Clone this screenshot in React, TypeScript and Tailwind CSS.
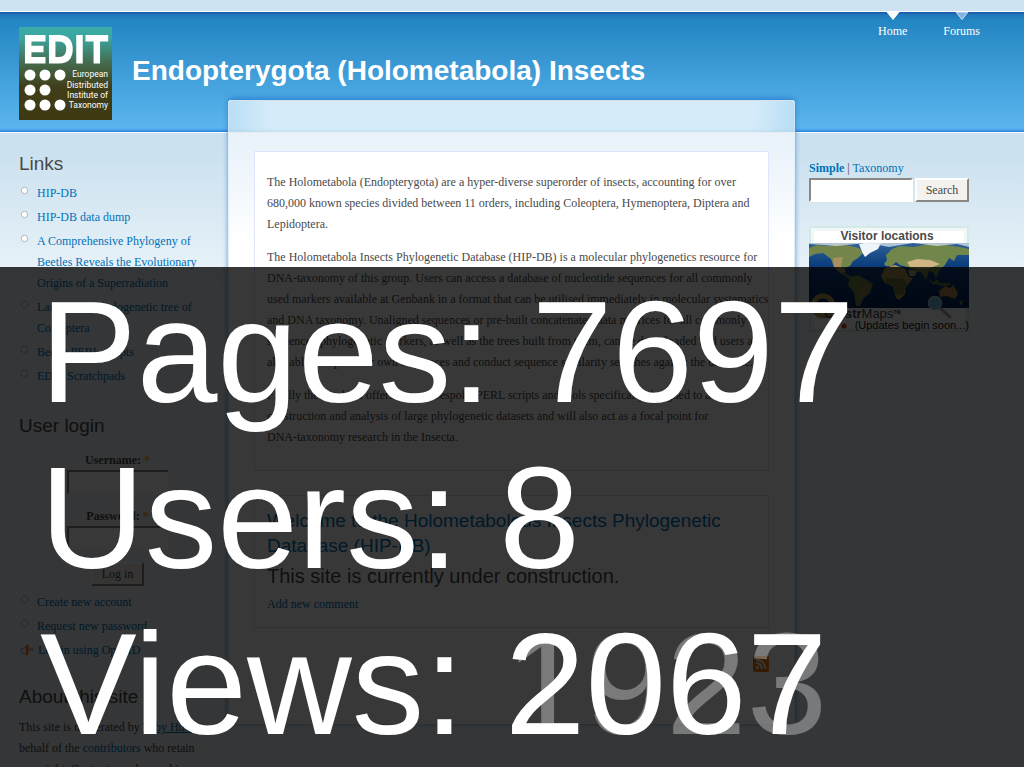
import type { ReactNode } from "react";

const serif = "font-['Liberation_Serif','Noto_Serif',serif]";
const sans = "font-['Liberation_Sans',Arial,sans-serif]";

function Bullet() {
  return (
    <svg width="9" height="9" viewBox="0 0 9 9" className="mt-[3px] shrink-0" aria-hidden="true">
      <circle cx="4.5" cy="4.5" r="3.2" fill="#fff" stroke="#b5b5b5" strokeWidth="1" />
    </svg>
  );
}

function OpenIdMark() {
  return (
    <svg width="14" height="12" viewBox="0 0 14 12" className="mt-1 -mr-1 shrink-0" aria-hidden="true">
      <path d="M6 3.6C3 3.8 1 5 1 6.7C1 8.4 3 9.6 6 10" fill="none" stroke="#b9b9b9" strokeWidth="1.6" />
      <path d="M8.4 3.6C10 3.8 11 4.3 12 5M12.6 3.4V6.4H9" fill="none" stroke="#b9b9b9" strokeWidth="1.3" />
      <path d="M6 1.5L8.4 0V10L6 11.4Z" fill="#f60" />
    </svg>
  );
}

function Item({ children, icon }: { children: ReactNode; icon?: ReactNode }) {
  return (
    <li className="mb-[3px] flex gap-2 pl-[1px]">
      {icon ?? <Bullet />}
      <a href="#" className="text-[#0072b9]">{children}</a>
    </li>
  );
}

function Logo() {
  const dots = [
    [11, 48], [26, 48], [41, 48],
    [11, 63], [26, 63],
    [11, 78], [26, 78], [41, 78],
  ];
  return (
    <svg width="93" height="93" viewBox="0 0 93 93" role="img" aria-label="EDIT" className="shrink-0">
      <defs>
        <linearGradient id="logoBg" x1="0" y1="0" x2="0" y2="1">
          <stop offset="0" stopColor="#3aaba6" />
          <stop offset="0.12" stopColor="#3ba59d" />
          <stop offset="0.4" stopColor="#45684a" />
          <stop offset="0.65" stopColor="#403d18" />
          <stop offset="1" stopColor="#3d3a12" />
        </linearGradient>
      </defs>
      <rect width="93" height="93" fill="url(#logoBg)" />
      <g fill="none" stroke="#fff" strokeWidth="6.5">
        <path d="M26.500 11.200H9.200V33.200H26.500M9 22H24.500" />
        <path d="M33.200 11.200H40C47 11.200 50.500 15 50.500 22C50.500 29.500 47 33.200 40 33.200H33.200Z" />
        <path d="M60.500 8V36.400M66.500 11.200H89.200M77.800 11V36.400" />
      </g>
      {dots.map(([x, y]) => (
        <circle key={`${x}-${y}`} cx={x} cy={y} r="5.5" fill="#fff" />
      ))}
      <g fill="#fff" fontFamily="Roboto, sans-serif" fontSize="8.5" fontWeight="400" textAnchor="end">
        <text x="89" y="50">European</text>
        <text x="89" y="61">Distributed</text>
        <text x="89" y="71">Institute of</text>
        <text x="89" y="81">Taxonomy</text>
      </g>
    </svg>
  );
}

function VisitorMap() {
  return (
    <svg width="160" height="106" viewBox="0 0 160 106" role="img" aria-label="Visitor locations" className="mt-6 block">
      <defs>
        <linearGradient id="sea" x1="0" y1="0" x2="0" y2="1">
          <stop offset="0" stopColor="#2f6298" />
          <stop offset="0.35" stopColor="#0b3c7c" />
          <stop offset="1" stopColor="#04245c" />
        </linearGradient>
      </defs>
      <rect width="160" height="106" fill="#d3eae6" />
      <rect x="2" y="2" width="156" height="102" fill="#f0f7f6" />
      <rect x="5" y="5" width="150" height="97" fill="#fff" />
      <rect y="17" width="160" height="65" fill="url(#sea)" />
      <path d="M0 22L8 19L18 20L30 18L42 20L50 22L54 27L49 32L44 35L41 40L36 42L34 46L39 49L44 52L41 53L31 47L25 41L22 33L14 27L6 28L0 31Z" fill="#73854b" />
      <path d="M24 32L34 31L32 40L37 46L32 47L25 41Z" fill="#a98f5b" />
      <path d="M50 18L60 16L72 17L69 23L61 27L56 31L53 26Z" fill="#eef4f8" />
      <path d="M41 51L49 49L58 54L64 58L61 67L54 73L51 80L47 80L45 67L39 59Z" fill="#718344" />
      <path d="M50 61L60 58L57 68L51 73Z" fill="#93804a" />
      <path d="M75 38L78 34L77 29L83 23L91 20L104 21L120 18L136 19L151 21L160 23V29L148 29L145 35L140 32L136 39L130 45L127 52L124 46L120 45L117 54L112 46L104 45L98 41L91 39L87 36L83 40L77 40Z" fill="#71864a" />
      <path d="M76 42L86 39L96 43L100 51L104 52L97 61L96 68L90 74L87 72L84 60L76 57L72 50Z" fill="#ad9057" />
      <path d="M77 52L95 53L98 59L94 68L87 69L84 59L77 57Z" fill="#6a743d" />
      <path d="M98 36L108 33L121 34L131 38L121 42L110 43L101 41Z" fill="#d1b584" />
      <path d="M99 44L108 45L106 50L101 50Z" fill="#c8a873" />
      <path d="M130 65L136 60L141 62L144 59L149 67L146 73L138 70L131 71Z" fill="#b0834a" />
      <path d="M119 52L124 56L129 53L130 57L139 57L143 59L134 60L123 58Z" fill="#607841" />
      <path d="M150 76L154 74L152 80Z" fill="#71834e" />
      <path d="M0 17H160V21L148 18L128 20L104 17L80 21L59 17L27 20L0 18Z" fill="#dce5eb" opacity=".75" />
      <circle cx="14" cy="80" r="10" fill="none" stroke="#b39b4e" strokeWidth="5" />
      <circle cx="126" cy="77" r="6.500" fill="#63b7df" stroke="#aec4d0" strokeWidth="1.500" />
      <path d="M131 82L142 92" stroke="#99a4a8" strokeWidth="3" />
      <g fill="#d23d20">
        <circle cx="27" cy="100" r="2.500" />
        <circle cx="35" cy="100" r="2.500" />
      </g>
      <g fontFamily="Liberation Sans, Arial, sans-serif">
        <text x="78" y="14" fontSize="12" fontWeight="700" textAnchor="middle" fill="#4a4a4a">Visitor locations</text>
        <text x="15" y="92" fontSize="13" fontWeight="700" fill="#444">Clustr<tspan fontWeight="400">Maps</tspan><tspan fontSize="5" dy="-4">TM</tspan></text>
        <text x="160" y="103" fontSize="11" textAnchor="end" fill="#111">(Updates begin soon...)</text>
      </g>
    </svg>
  );
}

function FeedIcon() {
  return (
    <svg width="16" height="16" viewBox="0 0 16 16" role="img" aria-label="Syndicate content">
      <rect width="16" height="16" rx="2" fill="#f57c12" />
      <circle cx="4.500" cy="11.500" r="1.600" fill="#fff" />
      <path d="M3 7A6 6 0 0 1 9 13M3 3.500A9.500 9.500 0 0 1 12.500 13" fill="none" stroke="#fff" strokeWidth="1.800" />
    </svg>
  );
}

function Arrow({ active }: { active?: boolean }) {
  return (
    <svg width="14" height="9" viewBox="0 0 14 9" aria-hidden="true">
      <path d="M1 0H13L7 7.500Z" fill={active ? "#fff" : "#7fb2e0"} stroke={active ? "#fff" : "#d6e6f5"} strokeWidth="1" />
    </svg>
  );
}

function Heading({ children }: { children: ReactNode }) {
  return <h2 className={`${sans} text-[19px] leading-6`}>{children}</h2>;
}

function Field({ id, label, type }: { id: string; label: string; type: string }) {
  return (
    <div className="mb-3 flex flex-col items-center">
      <label htmlFor={id} className="leading-5 font-bold">
        {label}: <span className="text-[#ffae00]">*</span>
      </label>
      <input id={id} type={type} className="h-6 w-[102px] border-2 border-t-[#8a8682] border-r-white border-b-white border-l-[#8a8682] bg-white px-1" />
    </div>
  );
}

const button =
  "border-2 border-t-white border-r-[#8a8682] border-b-[#8a8682] border-l-white bg-[#f3f2ee] text-center";

export default function App() {
  return (
    <div className={`${serif} h-screen overflow-hidden bg-[#edf5fa] text-[12px] leading-[21px] text-[#494949]`}>
      <div className="h-[11px] bg-[#cde3f1]" />
      <header className="flex h-[122px] items-start justify-between border-y border-white bg-[linear-gradient(#1658aa_0px,#2179bb_3px,#2385c2_8px,#5ab5ee_114px,#55b0ee_117px,#2a7ddb_120px)] pl-[19px]">
        <div className="flex items-start gap-5 pt-[15px]">
          <Logo />
          <h1 className={`${sans} pt-7 text-[28px] leading-8 font-bold text-white`}>
            <a href="#">Endopterygota (Holometabola) Insects</a>
          </h1>
        </div>
        <nav className="mr-11 flex gap-9 text-white">
          <a href="#" className="flex flex-col items-center leading-5"><Arrow active />Home</a>
          <a href="#" className="flex flex-col items-center leading-5"><Arrow />Forums</a>
        </nav>
      </header>

      <div className="grid grid-cols-[228px_minmax(0,1fr)_229px] items-start bg-[linear-gradient(#cbe1ef_0px,#cbe1ef_20px,#edf5fa_160px)]">
        <aside className="pt-[19px] pr-3 pl-[19px]">
          <Heading>Links</Heading>
          <ul className="mt-[7px]">
            <Item>HIP-DB</Item>
            <Item>HIP-DB data dump</Item>
            <Item>A Comprehensive Phylogeny of<br />Beetles Reveals the Evolutionary<br />Origins of a Superradiation</Item>
            <Item>Large-scale phylogenetic tree of<br />Coleoptera</Item>
            <Item>Beetle PERL scripts</Item>
            <Item>EDIT Scratchpads</Item>
          </ul>

          <div className="mt-[27px]">
            <Heading>User login</Heading>
            <form className="mt-3 flex flex-col" onSubmit={(e) => e.preventDefault()}>
              <Field id="user" label="Username" type="text" />
              <Field id="pass" label="Password" type="password" />
              <button type="submit" className={`${button} h-6 w-[53px] self-center leading-5`}>Log in</button>
            </form>
            <ul className="mt-[6px]">
              <Item>Create new account</Item>
              <Item>Request new password</Item>
              <Item icon={<OpenIdMark />}>Log in using OpenID</Item>
            </ul>
          </div>

          <div className="mt-6 whitespace-nowrap">
            <Heading>About this site</Heading>
            <p className="mt-2">
              This site is moderated by <a href="#" className="text-[#0072b9] underline">Toby Hunt</a> on<br />
              behalf of the <a href="#" className="text-[#0072b9]">contributors</a> who retain<br />
              copyright. Content may be used in
            </p>
          </div>
        </aside>

        <main className="-mt-[33px] rounded-t-[3px] border border-b-0 border-white bg-[linear-gradient(90deg,#b9def5_0px,#d5ebf9_40px,#d5ebf9_calc(100%-40px),#b9def5_100%)] shadow-[0_-2px_5px_#1f6fd099]">
          <div className="h-8 border-b border-white shadow-[0_0_4px_#2a78c880]" />
          <div className="bg-[linear-gradient(#e9f1f9_0px,#ebf3fb_20px,#fff_110px)] px-[25px] pt-[18px] pb-[52px] whitespace-nowrap shadow-[0_0_5px_#7db4d680]">
            <article className="border border-[#dfe5fb] bg-white px-3 pt-5 pb-[22px]">
              <p className="mb-3">
                The Holometabola (Endopterygota) are a hyper-diverse superorder of insects, accounting for over<br />
                680,000 known species divided between 11 orders, including Coleoptera, Hymenoptera, Diptera and<br />
                Lepidoptera.
              </p>
              <p className="mb-3">
                The Holometabola Insects Phylogenetic Database (HIP-DB) is a molecular phylogenetics resource for<br />
                DNA-taxonomy of this group. Users can access a database of nucleotide sequences for all commonly<br />
                used markers available at Genbank in a format that can be utilised immediately in molecular systematics<br />
                and DNA taxonomy. Unaligned sequences or pre-built concatenated data matrices for all commonly<br />
                sequenced phylogenetic markers, as well as the trees built from them, can be downloaded and users are<br />
                also able to input their own sequences and conduct sequence similarity searches against the database.
              </p>
              <p>
                Finally the database offers several bespoke PERL scripts and tools specifically designed to aid<br />
                construction and analysis of large phylogenetic datasets and will also act as a focal point for<br />
                DNA-taxonomy research in the Insecta.
              </p>
            </article>
            <article className="mt-6 border border-[#dfe5fb] bg-white px-3 pt-3 pb-3">
              <h2 className={`${sans} text-[19px] leading-[25px] text-[#0072b9]`}>
                <a href="#">Welcome to the Holometabolous Insects Phylogenetic<br />Database (HIP-DB)</a>
              </h2>
              <p className={`${sans} mt-1 text-[20px] leading-7`}>This site is currently under construction.</p>
              <a href="#" className="mt-1 block text-[#0072b9]">Add new comment</a>
            </article>
            <a href="#" className="mt-7 flex justify-end"><FeedIcon /></a>
          </div>
        </main>

        <aside className="pt-[25px] pl-[14px]">
          <div className="leading-5">
            <a href="#" className="font-bold text-[#0072b9]">Simple</a> | <a href="#" className="text-[#0072b9]">Taxonomy</a>
          </div>
          <form className="flex gap-[2px]" onSubmit={(e) => e.preventDefault()}>
            <input type="text" aria-label="Search terms" className="h-6 w-[104px] border-2 border-t-[#8a8682] border-r-white border-b-white border-l-[#8a8682] bg-white px-1" />
            <button type="submit" className={`${button} h-6 w-[54px] leading-5`}>Search</button>
          </form>
          <VisitorMap />
        </aside>
      </div>

      <section className={`${sans} fixed inset-x-0 bottom-0 h-[500px] bg-black/78 pt-[2px] pl-10 text-[145px] leading-[166px] whitespace-nowrap text-white`}>
        <p>Pages: 7697</p>
        <p>Users: 8</p>
        <p>
          Views:{" "}
          <span className="relative inline-block">
            <span className="absolute top-0 left-0 text-white/33">1923</span>
            <span className="relative">2067</span>
          </span>
        </p>
      </section>
    </div>
  );
}
